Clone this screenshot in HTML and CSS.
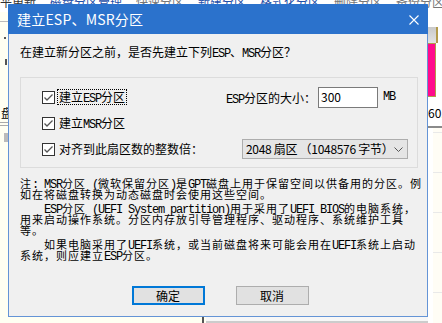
FILE: index.html
```html
<!DOCTYPE html>
<html lang="zh-CN">
<head>
<meta charset="utf-8">
<title>建立ESP、MSR分区</title>
<link rel="stylesheet" href="styles.css">
</head>
<body>
<div class="desk">
  <div class="bg-top">
    <span class="t-dark">平更新</span><span class="t-blue">磁盘分区管理</span><span class="t-gray">快速分区</span><span class="t-blue">新建分区</span><span class="t-blue">格式化分区</span><span class="t-gray">删除分区</span><span class="t-gray">备份分区表</span><span class="t-dark">系统</span>
  </div>
  <div class="bg-left">
    <span class="mark-line"></span>
    <span class="mark-dot"></span>
    <span class="mark-dash"></span>
    <span class="mark-char">盘</span>
    <span class="mark-rule"></span>
    <span class="mark-icon"></span>
  </div>
  <div class="bg-mid">
    <div class="bg-bottom">
      <span class="bb-ivory"></span>
      <span class="bb-vline"></span>
      <span class="bb-panel"></span>
    </div>
  </div>
  <div class="bg-right">
    <span class="r-space"></span>
    <span class="r-thumb"></span>
    <span class="r-bar"></span>
    <span class="r-text">60.</span>
    <span class="r-rule"></span>
    <span class="r-grid"></span>
  </div>

  <div class="dialog">
    <div class="titlebar">
      <span class="title">建立ESP、MSR分区</span>
      <svg class="close" width="10" height="10" viewBox="0 0 10 10"><path d="M0.5 0.5 L9.5 9.5 M9.5 0.5 L0.5 9.5" stroke="#fff" stroke-width="1.1" fill="none"/></svg>
    </div>
    <div class="content">
      <p class="question">在建立新分区之前，是否先建立下列<span class="en">ESP</span>、<span class="en">MSR</span>分区？</p>
      <div class="group">
        <div class="row">
          <label class="cb cb-esp">
            <svg class="box" width="13" height="13" viewBox="0 0 13 13"><rect x="0.5" y="0.5" width="12" height="12" fill="#fff" stroke="#333"/><path d="M2.5 6.5 L5 9 L10.5 3.5" stroke="#555" stroke-width="1.3" fill="none"/></svg>
            <span class="lbl focus">建立<span class="en">ESP</span>分区</span>
          </label>
          <span class="size-label"><span class="en">ESP</span>分区的大小：</span>
          <span class="input">300</span>
          <span class="unit en">MB</span>
        </div>
        <div class="row">
          <label class="cb">
            <svg class="box" width="13" height="13" viewBox="0 0 13 13"><rect x="0.5" y="0.5" width="12" height="12" fill="#fff" stroke="#333"/><path d="M2.5 6.5 L5 9 L10.5 3.5" stroke="#555" stroke-width="1.3" fill="none"/></svg>
            <span class="lbl">建立<span class="en">MSR</span>分区</span>
          </label>
        </div>
        <div class="row">
          <label class="cb cb-align">
            <svg class="box" width="13" height="13" viewBox="0 0 13 13"><rect x="0.5" y="0.5" width="12" height="12" fill="#fff" stroke="#333"/><path d="M2.5 6.5 L5 9 L10.5 3.5" stroke="#555" stroke-width="1.3" fill="none"/></svg>
            <span class="lbl">对齐到此扇区数的整数倍：</span>
          </label>
          <div class="select">
            <span class="sel-text">2048 扇区 （1048576 字节）</span>
            <svg class="chev" width="9" height="5" viewBox="0 0 9 5"><path d="M0.5 0.5 L4.5 4.5 L8.5 0.5" stroke="#555" fill="none"/></svg>
          </div>
        </div>
      </div>
      <div class="notes">
        <p>注<span class="en">: MSR</span>分区<span class="en"> (</span>微软保留分区<span class="en">)</span>是<span class="en">GPT</span>磁盘上用于保留空间以供备用的分区。例<br>如在将磁盘转换为动态磁盘时会使用这些空间。</p>
        <p class="indent"><span class="en">ESP</span>分区<span class="en"> (UEFI System partition)</span>用于采用了<span class="en">UEFI BIOS</span>的电脑系统，<br>用来启动操作系统。分区内存放引导管理程序、驱动程序、系统维护工具<br>等。</p>
        <p class="indent">如果电脑采用了<span class="en">UEFI</span>系统，或当前磁盘将来可能会用在<span class="en">UEFI</span>系统上启动<br>系统，则应建立<span class="en">ESP</span>分区。</p>
      </div>
      <div class="buttons">
        <button class="btn btn-default">确定</button>
        <button class="btn">取消</button>
      </div>
    </div>
  </div>
</div>
</body>
</html>
```
FILE: styles.css
```css
* { box-sizing: border-box; }
html, body { margin: 0; padding: 0; }
body {
  width: 442px;
  height: 323px;
  overflow: hidden;
  font-family: "Noto Sans CJK SC", "Noto Sans", sans-serif;
  font-size: 12px;
  color: #000;
  background: #fffff2;
}

/* SimSun-like half-width latin */
.en {
  font-family: "Liberation Mono", "DejaVu Sans Mono", monospace;
  font-size: 12px;
  letter-spacing: -1.2px;
  line-height: 0;
}

/* ---------- backdrop ---------- */
.desk {
  position: relative;
  width: 442px;
  height: 323px;
  display: grid;
  grid-template-columns: 8px 1fr 14px;
  grid-template-rows: 12px 1fr;
}
.bg-top {
  grid-column: 1 / 4;
  display: flex;
  gap: 14px;
  white-space: nowrap;
  overflow: hidden;
  font-size: 12px;
  line-height: 12px;
  margin-top: -4px;
  background: #fff;
}
.bg-top .t-dark { color: #333; }
.bg-top .t-blue { color: #1f4fa8; text-decoration: underline; }
.bg-top .t-gray { color: #777; }
.bg-top .t-dark:last-child { margin-left: auto; }

.bg-left {
  display: flex;
  flex-direction: column;
  align-items: flex-end;
  overflow: hidden;
}
.mark-line { width: 8px; height: 1px; background: #bbb; margin-top: 9px; }
.mark-dot { width: 2px; height: 2px; background: #555; margin-top: 15px; margin-right: 2px; }
.mark-dash { width: 2px; height: 6px; background: #555; margin-top: 20px; margin-right: 1px; }
.mark-char { font-size: 12px; line-height: 12px; margin-top: 42px; margin-right: -5px; }
.mark-rule { width: 8px; height: 4px; border-top: 1px solid #aaa; border-bottom: 1px solid #aaa; margin-top: 3px; }
.mark-icon { width: 4px; height: 9px; background: #bbb; margin-top: 7px; }

.bg-mid { display: flex; flex-direction: column; justify-content: flex-end; }
.bg-bottom { display: flex; height: 7px; }
.bb-ivory { width: 194px; }
.bb-vline { width: 2px; background: #555; }
.bb-panel { flex: 1; background: #f7f7f7; border-bottom: 2px solid #ccc; margin-left: 2px; }

.bg-right {
  display: flex;
  flex-direction: column;
  background: #fff;
  overflow: hidden;
}
.r-space { height: 15px; }
.r-thumb { height: 16px; width: 10px; background: linear-gradient(#c9c9c9, #e3e3e3); border-right: 2px solid #b39a4a; }
.r-bar { height: 54px; width: 8px; background: #ff0a8c; border: 1px solid #b39a4a; border-left: none; }
.r-text { font-size: 12px; line-height: 14px; margin-top: 9px; white-space: nowrap; }
.r-rule { height: 2px; background: #8a8a8a; margin-top: 6px; }
.r-grid {
  flex: 1;
  background-color: #fffdf5;
  background-image: linear-gradient(#e9e9e9 1px, transparent 1px);
  background-size: 14px 40px;
  background-position: 0 44px;
  border-left: 5px solid #fff;
}

/* ---------- dialog ---------- */
.dialog {
  position: absolute;
  left: 8px;
  top: 4px;
  width: 420px;
  height: 313px;
  border: 1px solid #6494d6;
  border-top-color: #2b72cc;
  display: flex;
  flex-direction: column;
  background: #f0f0f0;
}
.titlebar {
  height: 29px;
  background: #2b72cc;
  display: flex;
  align-items: center;
  margin: 0 -1px;
  padding: 0 9px 0 9px;
}
.title {
  color: #fff;
  font-size: 14px;
  line-height: 17px;
  flex: 1;
  letter-spacing: 0.2px;
}
.close { display: block; }

.content {
  flex: 1;
  display: flex;
  flex-direction: column;
  padding: 11px 9px 11px 11px;
}
.question {
  margin: 0;
  line-height: 14px;
  white-space: nowrap;
}

.group {
  margin-top: 18px;
  border: 1px solid #dcdcdc;
  padding: 6px 8px 5px 21px;
  display: flex;
  flex-direction: column;
}
.row {
  height: 26px;
  display: flex;
  align-items: center;
  white-space: nowrap;
}
.cb {
  display: flex;
  align-items: center;
  gap: 2px;
}
.cb-esp { width: 184px; }
.cb-align { width: 200px; }
.box { display: block; flex: none; }
.lbl { line-height: 14px; padding: 0 1px; border: 1px solid transparent; }
.lbl.focus { border: 1px dotted #000; }

.size-label { width: 92px; }
.input {
  width: 60px;
  height: 21px;
  background: #fff;
  border: 1px solid #7a7a7a;
  padding: 0 2px;
  line-height: 18px;
}
.unit { margin-left: 5px; }

.select {
  width: 166px;
  height: 20px;
  background: #e5e5e5;
  border: 1px solid #adadad;
  display: flex;
  align-items: center;
  padding: 0 4px 0 3px;
}
.sel-text {
  flex: 1;
  min-width: 0;
  overflow: hidden;
  line-height: 16px;
  letter-spacing: -0.3px;
}
.chev { display: block; flex: none; }

.notes { margin-top: 10px; display: flex; flex-direction: column; gap: 3px; }
.notes p {
  margin: 0;
  font-size: 11px;
  letter-spacing: 1px;
  line-height: 11px;
  white-space: nowrap;
}
.notes .indent { text-indent: 24px; }

.buttons {
  margin-top: auto;
  display: flex;
  justify-content: center;
  gap: 31px;
  padding-left: 2px;
}
.btn {
  width: 73px;
  height: 19px;
  padding: 0;
  margin: 0;
  font-family: inherit;
  font-size: 12px;
  line-height: 15px;
  color: #000;
  background: #e1e1e1;
  border: 1px solid #adadad;
  border-radius: 0;
}
.btn-default { border: 2px solid #0078d7; }
```
